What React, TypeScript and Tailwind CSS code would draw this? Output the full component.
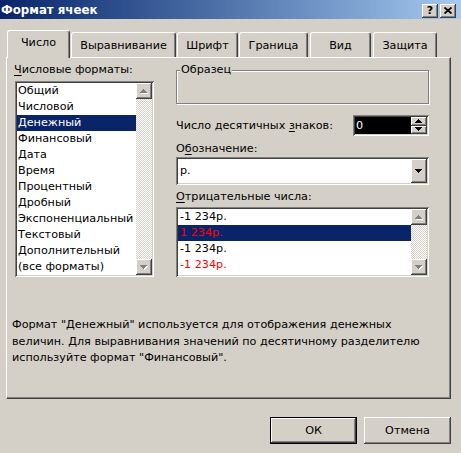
import React from "react";

const raised =
  "bg-[#d4d0c8] shadow-[inset_-1px_-1px_#404040,inset_1px_1px_#ffffff,inset_-2px_-2px_#808080,inset_2px_2px_#d4d0c8]";
const sunken =
  "shadow-[inset_1px_1px_#808080,inset_-1px_-1px_#ffffff,inset_2px_2px_#404040,inset_-2px_-2px_#d4d0c8]";

const formats = [
  "Общий",
  "Числовой",
  "Денежный",
  "Финансовый",
  "Дата",
  "Время",
  "Процентный",
  "Дробный",
  "Экспоненциальный",
  "Текстовый",
  "Дополнительный",
  "(все форматы)",
];

const negatives = [
  { t: "-1 234р.", red: false },
  { t: "1 234р.", red: true },
  { t: "-1 234р.", red: false },
  { t: "-1 234р.", red: true },
];

// pixel triangle, 7x4
const Tri = ({ up, disabled }: { up?: boolean; disabled?: boolean }) => {
  const rows = [0, 1, 2, 3];
  const draw = (dx: number, fill: string) =>
    rows.map((i) => (
      <rect
        key={fill + i}
        x={3 - i + dx}
        y={(up ? i : 3 - i) + dx}
        width={2 * i + 1}
        height={1}
        fill={fill}
      />
    ));
  return (
    <svg width="8" height="5" viewBox="0 0 8 5" shapeRendering="crispEdges">
      {disabled && draw(1, "#ffffff")}
      {draw(0, disabled ? "#808080" : "#000000")}
    </svg>
  );
};

const ScrollBar = () => (
  <div className="w-[16px] h-full flex flex-col">
    <div className={`${raised} h-[16px] flex items-center justify-center`}>
      <Tri up disabled />
    </div>
    <div className="flex-1 bg-[repeating-conic-gradient(#ffffff_0_25%,#d4d0c8_0_50%)] bg-[length:2px_2px]" />
    <div className={`${raised} h-[16px] flex items-center justify-center`}>
      <Tri disabled />
    </div>
  </div>
);

const Tab = ({
  label,
  active,
  w,
  ml,
}: {
  label: string;
  active?: boolean;
  w: string;
  ml: string;
}) => (
  <div
    className={`${w} ${ml} ${
      active ? "h-[28px] -mb-[1px] relative z-10 pb-[3px]" : "h-[25px] pt-[1px]"
    } bg-[#d4d0c8] border-l border-t border-white border-r border-r-[#404040] rounded-t-[3px] shadow-[inset_-1px_0_#808080] flex items-center justify-center`}
  >
    {label}
  </div>
);

export default function App() {
  return (
    <div className="w-[461px] h-[453px] bg-[#d4d0c8] overflow-hidden flex flex-col text-[11.2px] leading-[14px] text-black font-['DejaVu_Sans',sans-serif]">
      {/* title bar */}
      <div className="h-[19px] shrink-0 flex items-center bg-linear-to-r from-[#0a246a] to-[#a6caf0] pl-[1px] pr-[5px]">
        <span className="flex-1 text-white font-bold text-[11.8px] leading-[16px]">Формат ячеек</span>
        <div className={`${raised} w-[16px] h-[14px] mt-[2px] flex items-center justify-center font-bold text-[11px] leading-none`}>
          ?
        </div>
        <div className={`${raised} w-[16px] h-[14px] mt-[2px] ml-[2px] flex items-center justify-center`}>
          <svg width="8" height="7" viewBox="0 0 8 7">
            <path d="M0.5 0.5 L7.5 6.5 M7.5 0.5 L0.5 6.5" stroke="#000" strokeWidth="1.8" />
          </svg>
        </div>
      </div>

      {/* tabs */}
      <div className="mt-[11px] pl-[7px] h-[27px] flex items-end">
        <Tab label="Число" active w="w-[63px]" ml="ml-0" />
        <Tab label="Выравнивание" w="w-[105px]" ml="ml-[1px]" />
        <Tab label="Шрифт" w="w-[61px]" ml="ml-[1px]" />
        <Tab label="Граница" w="w-[69px]" ml="ml-[1px]" />
        <Tab label="Вид" w="w-[61px]" ml="ml-[2px]" />
        <Tab label="Защита" w="w-[64px]" ml="ml-[2px]" />
      </div>

      {/* panel */}
      <div className="ml-[6px] w-[445px] h-[342px] shrink-0 border-l border-t border-white border-r border-b border-r-[#404040] border-b-[#404040] shadow-[inset_-1px_-1px_#808080] flex flex-col">
        <div className="flex pl-[7px] pt-[5px]">
          {/* left column */}
          <div className="w-[140px] flex flex-col">
            <div>
              <span className="underline underline-offset-2">Ч</span>исловые форматы:
            </div>
            <div className={`${sunken} bg-white mt-[4px] ml-[1px] w-[139px] h-[196px] p-[2px] flex`}>
              <div className="flex-1 flex flex-col">
                {formats.map((f) => (
                  <div
                    key={f}
                    className={`h-[16px] leading-[16px] pl-[1px] whitespace-nowrap ${
                      f === "Денежный" ? "bg-[#0a246a] text-white" : ""
                    }`}
                  >
                    {f}
                  </div>
                ))}
              </div>
              <ScrollBar />
            </div>
          </div>

          {/* right column */}
          <div className="ml-[22px] w-[253px] flex flex-col">
            <div className="relative mt-[7px] h-[34px] border border-[#808080] shadow-[inset_1px_1px_#ffffff,1px_1px_#ffffff]">
              <span className="absolute -top-[8px] left-[3px] px-[1px] bg-[#d4d0c8]">Образец</span>
            </div>

            <div className="mt-[11px] flex items-center justify-between">
              <div>
                Число десятичных <span className="underline underline-offset-2">з</span>наков:
              </div>
              <div className={`${sunken} bg-white w-[76px] h-[21px] p-[2px] flex`}>
                <div className="flex-1 bg-black text-white pl-[1px] leading-[17px]">0</div>
                <div className="w-[16px] flex flex-col">
                  <div className={`${raised} flex-1 flex items-center justify-center`}>
                    <Tri up />
                  </div>
                  <div className={`${raised} flex-1 flex items-center justify-center`}>
                    <Tri />
                  </div>
                </div>
              </div>
            </div>

            <div className="mt-[6px]">
              О<span className="underline underline-offset-2">б</span>означение:
            </div>
            <div className={`${sunken} bg-white mt-[1px] h-[28px] p-[2px] flex`}>
              <div className="flex-1 pl-[2px] flex items-center">р.</div>
              <div className={`${raised} w-[16px] flex items-center justify-center`}>
                <Tri />
              </div>
            </div>

            <div className="mt-[5px]">
              <span className="underline underline-offset-2">О</span>трицательные числа:
            </div>
            <div className={`${sunken} bg-white mt-[3px] h-[70px] p-[2px] flex`}>
              <div className="flex-1 flex flex-col">
                {negatives.map((n, i) => (
                  <div
                    key={i}
                    className={`h-[16px] leading-[16px] pl-[2px] ${i === 1 ? "bg-[#0a246a]" : ""} ${
                      n.red ? "text-[#ff0000]" : ""
                    }`}
                  >
                    {n.t}
                  </div>
                ))}
              </div>
              <ScrollBar />
            </div>
          </div>
        </div>

        <p className="mt-[40px] pl-[5px] pr-[20px] leading-[16.5px]">
          Формат "Денежный" используется для отображения денежных величин. Для выравнивания значений по
          десятичному разделителю используйте формат "Финансовый".
        </p>
      </div>

      {/* buttons */}
      <div className="mt-[18px] flex pl-[270px] gap-[7px]">
        <div className="w-[87px] h-[27px] border border-black">
          <div className={`${raised} h-full flex items-center justify-center`}>ОК</div>
        </div>
        <div className={`${raised} w-[87px] h-[27px] flex items-center justify-center`}>Отмена</div>
      </div>
    </div>
  );
}
